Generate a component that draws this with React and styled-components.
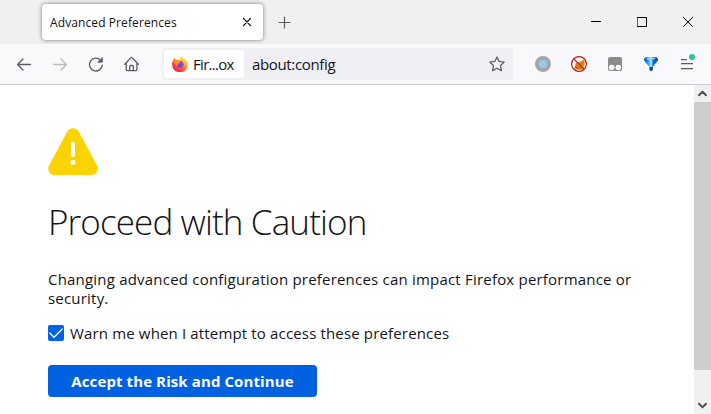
import React from 'react';
import styled, { createGlobalStyle } from 'styled-components';

const GlobalStyle = createGlobalStyle`
  *, *::before, *::after { box-sizing: border-box; }
  body { margin: 0; overflow: hidden; font-family: "Open Sans", "Noto Sans", sans-serif; color: #15141a; }
  button, input { font: inherit; color: inherit; border: 0; padding: 0; margin: 0; background: none; }
  svg { display: block; flex: none; }
`;

const Browser = styled.div`
  width: 711px;
  height: 414px;
  display: flex;
  flex-direction: column;
  background: #fff;
`;

const TitleBar = styled.header`
  height: 44px;
  flex: none;
  display: flex;
  align-items: center;
  background: #f0f0f0;
  padding-left: 42px;
`;

const Tab = styled.div`
  width: 221px;
  height: 36px;
  display: flex;
  align-items: center;
  justify-content: space-between;
  padding: 0 11px 0 8px;
  border-radius: 4px;
  background: #fff;
  box-shadow: 0 0 4px rgba(0, 0, 0, 0.5);
`;

const TabTitle = styled.span`
  font-size: 12px;
  line-height: 16px;
  letter-spacing: 0.1px;
  white-space: nowrap;
  padding-top: 2px;
`;

const IconButton = styled.button`
  width: ${(p) => p.$width || 36}px;
  height: 32px;
  display: grid;
  place-items: center;
  flex: none;
`;

const WindowControls = styled.div`
  display: flex;
  margin-left: auto;
`;

const ToolBar = styled.nav`
  height: 41px;
  flex: none;
  display: flex;
  align-items: center;
  padding: 0 6px;
  background: #f9f9fb;
  border-bottom: 1px solid #ccccce;
`;

const UrlBar = styled.div`
  width: 351px;
  height: 32px;
  margin: 0 12px;
  display: flex;
  align-items: center;
  padding: 0 0 0 2px;
  border-radius: 4px;
  background: #f0f0f4;
  font-size: 15px;
  line-height: 20px;
`;

const Identity = styled.div`
  width: 80px;
  height: 28px;
  display: flex;
  align-items: center;
  gap: 5px;
  padding-left: 8px;
  padding-bottom: 1px;
  border-radius: 3px;
  background: #fff;
  letter-spacing: -0.7px;
  white-space: nowrap;
`;

const Address = styled.span`
  flex: 1;
  padding: 0 0 1px 8px;
  letter-spacing: -0.35px;
`;

const Viewport = styled.div`
  flex: 1;
  min-height: 0;
  display: flex;
`;

const Page = styled.main`
  flex: 1;
  padding: 42px 48px 0;
  display: flex;
  flex-direction: column;
  align-items: flex-start;
`;

const Heading = styled.h1`
  margin: 24px 0 0;
  font-size: 35px;
  line-height: 46px;
  font-weight: 300;
  letter-spacing: -0.88px;
  white-space: nowrap;
`;

const Message = styled.p`
  margin: 25px -10px 0 0;
  font-size: 15px;
  line-height: 19px;
  letter-spacing: 0.205px;
`;

const CheckRow = styled.label`
  margin-top: 15px;
  height: 20px;
  display: flex;
  align-items: center;
  gap: 6px;
  font-size: 15px;
  letter-spacing: 0.155px;
  white-space: nowrap;
`;

const CheckBox = styled.span`
  width: 16px;
  height: 16px;
  border-radius: 2px;
  background: #0061e0;
`;

const AcceptButton = styled.button`
  && {
    margin-top: 22px;
    width: 269px;
    height: 32px;
    border-radius: 4px;
    background: #0061e0;
    color: #fbfbfe;
    font-size: 15px;
    font-weight: 700;
    letter-spacing: 0.1px;
    white-space: nowrap;
  }
`;

const ScrollTrack = styled.div`
  width: 17px;
  display: flex;
  flex-direction: column;
  background: #f0f0f0;
`;

const ScrollArrow = styled.div`
  height: 17px;
  display: grid;
  place-items: center;
  margin-top: ${(p) => (p.$end ? 'auto' : 0)};
`;

const ScrollThumb = styled.div`
  height: 268px;
  background: #cdcdcd;
`;

const Stroke = ({ size = 16, color = '#5b5b66', width = 1.3, children }) => (
  <svg width={size} height={size} viewBox={`0 0 ${size} ${size}`} fill="none" stroke={color} strokeWidth={width} strokeLinecap="round" strokeLinejoin="round">
    {children}
  </svg>
);

const FirefoxLogo = () => (
  <svg width="16" height="16" viewBox="0 0 16 16">
    <defs>
      <linearGradient id="flame" x1="0.85" y1="0.1" x2="0.25" y2="0.95">
        <stop offset="0" stopColor="#fff44f" />
        <stop offset="0.35" stopColor="#ffb02e" />
        <stop offset="0.65" stopColor="#ff5634" />
        <stop offset="1" stopColor="#f5156c" />
      </linearGradient>
      <linearGradient id="globe" x1="0.7" y1="0" x2="0.3" y2="1">
        <stop offset="0" stopColor="#b144e8" />
        <stop offset="1" stopColor="#5b46c5" />
      </linearGradient>
    </defs>
    <path fill="url(#flame)" d="M9.8.2C11 1.5 12 2.3 12.7 3.5l.3-1c2 2 3 4.100 2.900 6.300A7.900 7.600 0 0 1 .1 8.500C0 6.200.8 4.500 1.700 3.300l.4-1.600L4 3.600C5.500 3.300 7 3.500 8.200 4.100 8.100 2.600 8.800 1 9.800.2z" />
    <circle cx="8.200" cy="8.200" r="3.300" fill="url(#globe)" />
    <path fill="#ff9830" d="M3 4.200c1.800-.6 3.200 0 4.200 1.200l1.500.2c-.3 1.200-1.900 1.200-2 2.200-1 .4-1.400 1.200-1.200 2.400C3.300 9.200 2.200 6.200 3 4.200z" />
  </svg>
);

const NoFoxIcon = () => (
  <svg width="16" height="16" viewBox="0 0 16 16">
    <circle cx="8" cy="8" r="7.400" fill="#fff" />
    <path d="M3.300 11.500l1-2 .5-2.500 2-1.200L8 7l1.300-2.200 1 .7 1-.8.8-1.200 1.400 1.300.2 3.500-1.200 2.200.2 1.700-2.200 1.500H6L3.500 12.800z" fill="#e0830a" />
    <path d="M5 10.500v1.300l2 .7M8.500 8.500l1 .7M11.500 6.500v1M8 10.800l1.500 1M11.800 10.800v1" fill="none" stroke="#8a5218" strokeWidth=".8" />
    <circle cx="8" cy="8" r="7.400" fill="none" stroke="#c8141e" strokeWidth="1.200" />
    <path d="M2.800 2.800l10.400 10.400" stroke="#c8141e" strokeWidth="1.200" />
  </svg>
);

const FunnelIcon = () => (
  <svg width="16" height="16" viewBox="0 0 16 16">
    <defs>
      <linearGradient id="funnel">
        <stop offset="0" stopColor="#0a4a9c" />
        <stop offset="0.2" stopColor="#1583ee" />
        <stop offset="0.38" stopColor="#58b4fb" />
        <stop offset="0.5" stopColor="#d0ecff" />
        <stop offset="0.64" stopColor="#0a7fe6" />
        <stop offset="1" stopColor="#063c85" />
      </linearGradient>
    </defs>
    <path d="M1 3.600C1 2 2.300 1.100 4 1h8c1.700.1 3 1 3 2.600 0 1.300-1.400 2.700-2.900 4.400L9.900 10.700v3.200L8 15.500l-1.600-1.300v-3.500L3.900 8C2.400 6.300 1 4.900 1 3.600z" fill="url(#funnel)" />
    <path d="M3.200 2c3-.6 6.600-.6 9.600 0L11 3.500H5z" fill="#a8ddff" opacity=".8" />
    <path d="M6.600 11h3v2.900L8 15.200l-1.400-1.300z" fill="#12456f" />
  </svg>
);

export default function App() {
  return (
    <>
      <GlobalStyle />
      <Browser>
        <TitleBar>
          <Tab>
            <TabTitle>Advanced Preferences</TabTitle>
            <Stroke size={10} color="#15141a" width={1.2}><path d="M1.500 1.500l7 7M8.500 1.500l-7 7" /></Stroke>
          </Tab>
          <IconButton $width={43} aria-label="New tab">
            <Stroke size={13} width={1.200}><path d="M6.500 1v11M1 6.500h11" /></Stroke>
          </IconButton>
          <WindowControls>
            <IconButton $width={46} aria-label="Minimize"><Stroke size={10} color="#000" width={1}><path d="M.5 4.500h9" /></Stroke></IconButton>
            <IconButton $width={46} aria-label="Maximize"><Stroke size={10} color="#000" width={1}><path d="M.5.5h9v9h-9z" /></Stroke></IconButton>
            <IconButton $width={46} aria-label="Close"><Stroke size={10} color="#000" width={1}><path d="M.5.5l9 9M9.500.5l-9 9" /></Stroke></IconButton>
          </WindowControls>
        </TitleBar>
        <ToolBar>
          <IconButton aria-label="Back"><Stroke><path d="M14.400 8.500H1.700M7 3L1.600 8.500 7 14" /></Stroke></IconButton>
          <IconButton aria-label="Forward"><Stroke color="#bdbdc1"><path d="M1.600 8.500h12.700M9 3l5.400 5.500L9 14" /></Stroke></IconButton>
          <IconButton aria-label="Reload">
            <Stroke><path d="M14.300 9.100A6.400 6.400 0 1 1 12.500 4.100" /><path d="M14.300 2v4.300H10z" fill="#5b5b66" strokeWidth=".8" /></Stroke>
          </IconButton>
          <IconButton aria-label="Home">
            <Stroke><path d="M.8 8.300L6.800 1.900c.5-.5 1-.5 1.500 0l6 6.400M2.200 7.400v6.200c0 .6.400 1 1 1h8.700c.6 0 1-.4 1-1V7.400M5.700 14.400V10.500c0-.6.4-1 1-1h1.700c.6 0 1 .4 1 1v3.900" /></Stroke>
          </IconButton>
          <UrlBar>
            <Identity><FirefoxLogo /><span>Fir...ox</span></Identity>
            <Address>about:config</Address>
            <IconButton $width={32} aria-label="Bookmark">
              <Stroke width={1.250}><path d="M8 .9l2.100 4.500 5.100.6-3.700 3.500.9 5.200L8 12.200l-4.400 2.500.9-5.200L.8 6l5.100-.6z" /></Stroke>
            </IconButton>
          </UrlBar>
          <IconButton aria-label="Container">
            <svg width="16" height="16" viewBox="0 0 16 16"><circle cx="8" cy="8" r="8" fill="#a6a6a6" /><circle cx="8" cy="8" r="4.200" fill="#94caf0" /></svg>
          </IconButton>
          <IconButton aria-label="Blocker"><NoFoxIcon /></IconButton>
          <IconButton aria-label="Scripts">
            <svg width="16" height="16" viewBox="0 0 16 16"><rect x="1" y="1" width="14" height="14" rx="2" fill="#8b8b8b" /><circle cx="4.700" cy="11.500" r="2.800" fill="#fff" /><circle cx="11.300" cy="11.500" r="2.800" fill="#fff" /></svg>
          </IconButton>
          <IconButton aria-label="Filter"><FunnelIcon /></IconButton>
          <IconButton aria-label="Menu">
            <svg width="16" height="20" viewBox="0 0 16 20" fill="none" stroke="#5b5b66" strokeWidth="1.250"><path d="M2 5.500H8M2 9.500h12M2 14.500h12" /><circle cx="13" cy="3.100" r="3" fill="#2ac3a2" stroke="none" /></svg>
          </IconButton>
        </ToolBar>
        <Viewport>
          <Page>
            <svg width="50" height="48" viewBox="0 0 50 48">
              <path fill="#fbd300" d="M19.400 4.300C21.800.1 28.200.1 30.600 4.300l18.500 34.400c2.100 4-.8 9.300-5.300 9.300H6.200C1.700 48-1.200 42.700.9 38.700z" />
              <path d="M25 16.700v11.600" stroke="#fff" strokeWidth="4" strokeLinecap="round" /><circle cx="25" cy="35.500" r="2.500" fill="#fff" />
            </svg>
            <Heading>Proceed with Caution</Heading>
            <Message>Changing advanced configuration preferences can impact Firefox performance or security.</Message>
            <CheckRow>
              <CheckBox><Stroke color="#fff" width={1.300}><path d="M1.700 8l4.300 4.300L14.300 4" /></Stroke></CheckBox>
              <span>Warn me when I attempt to access these preferences</span>
            </CheckRow>
            <AcceptButton>Accept the Risk and Continue</AcceptButton>
          </Page>
          <ScrollTrack>
            <ScrollArrow><Stroke size={9} color="#505050" width={2}><path d="M1 6.300l3.500-3.500L8 6.300" /></Stroke></ScrollArrow>
            <ScrollThumb />
            <ScrollArrow $end><Stroke size={9} color="#505050" width={2}><path d="M1 2.700l3.500 3.500L8 2.700" /></Stroke></ScrollArrow>
          </ScrollTrack>
        </Viewport>
      </Browser>
    </>
  );
}
